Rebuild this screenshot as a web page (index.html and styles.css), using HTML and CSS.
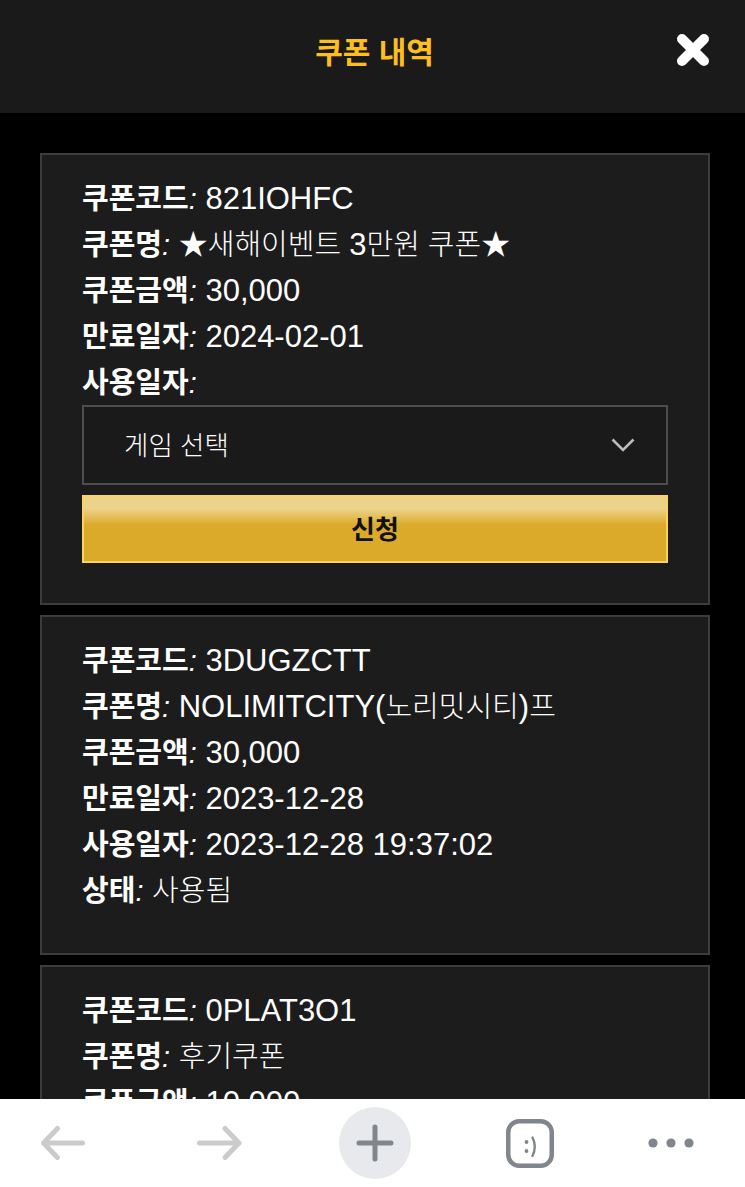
FILE: index.html
```html
<!DOCTYPE html>
<html lang="ko">
<head>
<meta charset="utf-8">
<title>쿠폰 내역</title>
<link rel="stylesheet" href="styles.css">
</head>
<body>
<div class="app">
  <header class="top">
    <h1 class="title">쿠폰 내역</h1>
    <svg class="close" viewBox="0 0 34 34" width="34" height="34" aria-label="닫기"><path d="M6 6 L28 28 M28 6 L6 28" fill="none" stroke="#fff" stroke-width="10" stroke-linecap="round"/></svg>
  </header>
  <main class="list">
    <section class="card">
      <p class="row"><b>쿠폰코드</b><i>:</i><span class="en"> 821IOHFC</span></p>
      <p class="row"><b>쿠폰명</b><i>:</i><span class="en"> </span>★새해이벤트 <span class="en">3</span>만원 쿠폰★</p>
      <p class="row"><b>쿠폰금액</b><i>:</i><span class="en"> 30,000</span></p>
      <p class="row"><b>만료일자</b><i>:</i><span class="en"> 2024-02-01</span></p>
      <p class="row"><b>사용일자</b><i>:</i></p>
      <div class="select">
        <span class="select-text">게임 선택</span>
        <svg viewBox="0 0 24 14" width="24" height="14"><path d="M1.5 1.5 L12 12 L22.5 1.5" fill="none" stroke="#bbb" stroke-width="2.6"/></svg>
      </div>
      <button class="apply" type="button">신청</button>
    </section>
    <section class="card">
      <p class="row"><b>쿠폰코드</b><i>:</i><span class="en"> 3DUGZCTT</span></p>
      <p class="row"><b>쿠폰명</b><i>:</i><span class="en"> NOLIMITCITY(</span>노리밋시티<span class="en">)</span>프</p>
      <p class="row"><b>쿠폰금액</b><i>:</i><span class="en"> 30,000</span></p>
      <p class="row"><b>만료일자</b><i>:</i><span class="en"> 2023-12-28</span></p>
      <p class="row"><b>사용일자</b><i>:</i><span class="en"> 2023-12-28 19:37:02</span></p>
      <p class="row"><b>상태</b><i>:</i><span class="en"> </span>사용됨</p>
    </section>
    <section class="card">
      <p class="row"><b>쿠폰코드</b><i>:</i><span class="en"> 0PLAT3O1</span></p>
      <p class="row"><b>쿠폰명</b><i>:</i><span class="en"> </span>후기쿠폰</p>
      <p class="row"><b>쿠폰금액</b><i>:</i><span class="en"> 10,000</span></p>
    </section>
  </main>
  <nav class="bar">
    <svg class="ico-back" viewBox="0 0 48 40" width="48" height="40"><path d="M43.5 20 H4.5 L18.5 5.5 M4.5 20 L18.5 34.5" fill="none" stroke="#cbcbcb" stroke-width="5" stroke-linecap="round" stroke-linejoin="round"/></svg>
    <svg class="ico-forward" viewBox="0 0 48 40" width="48" height="40"><path d="M4.5 20 H44 L30 5.5 M44 20 L30 34.5" fill="none" stroke="#cbcbcb" stroke-width="5" stroke-linecap="round" stroke-linejoin="round"/></svg>
    <span class="plus"><svg viewBox="0 0 40 40" width="40" height="40"><path d="M20 4 V36 M4 20 H36" fill="none" stroke="#80868b" stroke-width="5" stroke-linecap="round"/></svg></span>
    <svg class="ico-tabs" viewBox="0 0 48 49" width="48" height="49"><rect x="2.25" y="2.25" width="43.5" height="44.5" rx="11" fill="none" stroke="#80868b" stroke-width="4.5"/><circle cx="20.5" cy="23" r="1.9" fill="#80868b"/><circle cx="20.5" cy="32" r="1.9" fill="#80868b"/><path d="M26.5 18.5 Q31 27.5 26.5 37" fill="none" stroke="#80868b" stroke-width="2.4" stroke-linecap="round"/></svg>
    <svg class="ico-more" viewBox="0 0 48 12" width="48" height="12"><circle cx="5" cy="6" r="4.6" fill="#80868b"/><circle cx="23" cy="6" r="4.6" fill="#80868b"/><circle cx="41" cy="6" r="4.6" fill="#80868b"/></svg>
  </nav>
</div>
</body>
</html>
```

FILE: styles.css
```css
* { box-sizing: border-box; }
html, body { margin: 0; height: 100%; }
body {
  background: #000;
  color: #fff;
  font-family: "Liberation Sans", "Noto Sans CJK KR", sans-serif;
  font-size: 29px;
}
.app {
  display: flex;
  flex-direction: column;
  height: 1187px;
  overflow: hidden;
}
.top {
  flex: none;
  height: 113px;
  background: #1a1a1a;
  display: flex;
  align-items: flex-start;
  justify-content: center;
  position: relative;
}
.title {
  margin: 31px 0 0;
  padding-left: 4px;
  color: #fdbe1e;
  font-size: 30px;
  line-height: 44px;
  font-weight: 700;
}
.close {
  position: absolute;
  left: 676px;
  top: 33px;
}
.list {
  flex: 1;
  min-height: 0;
  overflow: hidden;
  padding: 40px 35px 0 40px;
  display: flex;
  flex-direction: column;
  gap: 10px;
}
.card {
  flex: none;
  background: #1c1c1c;
  border: 2px solid #3c3c3c;
  padding: 20px 40px 40px;
}
.row {
  margin: 0;
  height: 46px;
  line-height: 48px;
  white-space: pre-wrap;
  font-weight: 300;
}
.row b { font-weight: 700; }
.row i { font-style: italic; font-weight: 300; }
.en { font-size: 31px; }
.select {
  height: 80px;
  border: 2px solid #4d4d4d;
  background: #1a1a1a;
  padding: 0 31px 0 40px;
  display: flex;
  align-items: center;
  justify-content: space-between;
  font-size: 26.5px;
  font-weight: 300;
}
.select-text { margin-bottom: 3px; }
.apply {
  display: block;
  width: 100%;
  height: 68px;
  margin-top: 10px;
  padding: 0 0 4px;
  border: 2px solid #fdd25f;
  background: linear-gradient(180deg, #ecd38a 0, #ecd38a 18%, #dcaa2a 44%, #dcaa2a 100%);
  color: #111;
  font: 700 26px "Liberation Sans", "Noto Sans CJK KR", sans-serif;
}
.bar {
  flex: none;
  height: 88px;
  background: #fff;
  display: flex;
  align-items: center;
  padding: 0 0 0 39px;
}
.ico-forward { margin-left: 108px; }
.plus {
  margin-left: 96px;
  width: 72px;
  height: 72px;
  border-radius: 50%;
  background: #e8e9ed;
  display: flex;
  align-items: center;
  justify-content: center;
}
.ico-tabs { margin-left: 95px; }
.ico-more { margin-left: 94px; }
```
